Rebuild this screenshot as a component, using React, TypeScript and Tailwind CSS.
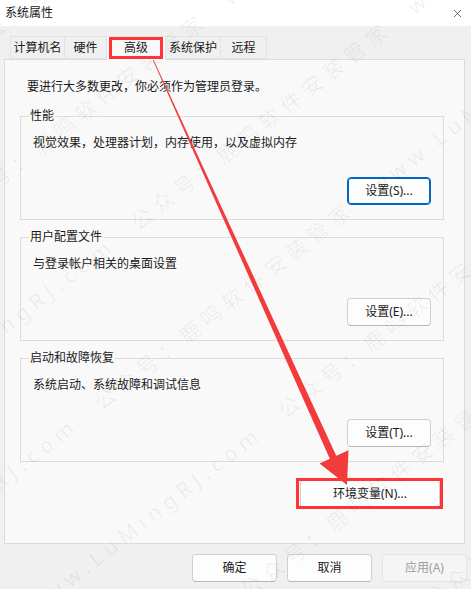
import { X } from "lucide-react";

const font = "font-['Noto_Sans','Noto_Sans_CJK_SC',sans-serif]";

type BtnProps = {
  label: string;
  primary?: boolean;
  disabled?: boolean;
  className?: string;
};

function WinButton({ label, primary, disabled, className = "" }: BtnProps) {
  const tone = disabled
    ? "border-[#e3e3e3] bg-[#f5f5f5] text-[#9d9d9d]"
    : primary
      ? "border-[#0067c0] bg-[#fdfdfd] text-[#1a1a1a] shadow-[inset_0_0_0_1px_#0067c0]"
      : "border-[#d0d0d0] border-b-[#b8b8b8] bg-[#fdfdfd] text-[#1a1a1a]";
  return (
    <button
      className={`flex h-[28px] items-center justify-center rounded-[4px] border text-[12px] leading-none ${tone} ${className}`}
    >
      {label}
    </button>
  );
}

type GroupProps = {
  title: string;
  text: string;
  button: string;
  primary?: boolean;
  className?: string;
};

function Group({ title, text, button, primary, className = "" }: GroupProps) {
  return (
    <div
      className={`relative flex h-[104px] w-[424px] flex-col border border-[#dcdcdc] ${className}`}
    >
      <span className="absolute -top-[9px] left-[8px] bg-[#f9f9f9] px-[1px] text-[12px] leading-[16px] text-[#1a1a1a]">
        {title}
      </span>
      <p className="ml-[12px] mt-[18px] text-[12px] leading-[16px] text-[#1a1a1a]">
        {text}
      </p>
      <div className="mr-[12px] mt-[26px] flex justify-end">
        <WinButton label={button} primary={primary} className="w-[84px]" />
      </div>
    </div>
  );
}

const tabs = [
  { name: "计算机名", w: "w-[55px]" },
  { name: "硬件", w: "w-[42px]" },
  { name: "高级", w: "w-[59px]", active: true },
  { name: "系统保护", w: "w-[55px]" },
  { name: "远程", w: "w-[46px]" },
];

function Watermark() {
  const row = "www.LuMingRJ.com\u2003公众号：鹿鸣软件安装管家\u2003";
  return (
    <div
      aria-hidden
      className="pointer-events-none absolute inset-0 overflow-hidden select-none"
    >
      <div className="absolute left-[-260px] top-[-200px] flex w-[1000px] -rotate-[38deg] flex-col gap-[88px] text-[21px] tracking-[6px] whitespace-nowrap text-black/[0.06]">
        {Array.from({ length: 9 }).map((_, i) => (
          <div key={i} className={i % 2 ? "pl-[140px]" : ""}>
            {row}
            {row}
          </div>
        ))}
      </div>
    </div>
  );
}

function Arrow() {
  // tapered red arrow from the tab down to the env button
  return (
    <svg
      className="pointer-events-none absolute inset-0"
      width="471"
      height="589"
      viewBox="0 0 471 589"
    >
      <polygon
        points="147.6,48.2 148.4,48.6 336.6,456.4 330.0,459.3"
        fill="#f23b3b"
      />
      <polygon points="319.5,463.5 348.5,450.3 347,485" fill="#f23b3b" />
    </svg>
  );
}

export default function App() {
  return (
    <div
      className={`relative h-[589px] w-[471px] overflow-hidden bg-[#f0f0f0] ${font}`}
    >
      <div className="flex h-[26px] items-center justify-between bg-white pl-[5px] pr-[7px]">
        <span className="text-[12px] leading-none text-[#1a1a1a]">系统属性</span>
        <X size={13} strokeWidth={1.2} className="text-[#222]" />
      </div>

      <div className="ml-[10px] mt-[10px] flex h-[23px]">
        {tabs.map((t) => (
          <div
            key={t.name}
            className={`relative flex items-center justify-center border border-l-0 first:border-l text-[12px] leading-none text-[#1a1a1a] ${t.w} ${
              t.active
                ? "z-10 -mb-px border-[#e5e5e5] border-b-transparent bg-[#f9f9f9]"
                : "border-[#e3e3e3] bg-[#f0f0f0]"
            }`}
          >
            {t.name}
            {t.active ? (
              <span className="absolute left-[2px] top-0 h-[22px] w-[54px] border-[3px] border-[#ff3434]" />
            ) : null}
          </div>
        ))}
      </div>

      <div className="ml-[4px] flex h-[485px] w-[461px] flex-col border border-[#dcdcdc] bg-[#f9f9f9] pl-[15px]">
        <p className="ml-[7px] mt-[19px] text-[12px] leading-[16px] text-[#1a1a1a]">
          要进行大多数更改，你必须作为管理员登录。
        </p>
        <Group
          className="mt-[21px]"
          title="性能"
          text="视觉效果，处理器计划，内存使用，以及虚拟内存"
          button="设置(S)..."
          primary
        />
        <Group
          className="mt-[17px]"
          title="用户配置文件"
          text="与登录帐户相关的桌面设置"
          button="设置(E)..."
        />
        <Group
          className="mt-[17px]"
          title="启动和故障恢复"
          text="系统启动、系统故障和调试信息"
          button="设置(T)..."
        />
        <div className="mt-[18px] flex w-[424px] justify-end pr-[4px]">
          <div className="relative">
            <WinButton label="环境变量(N)..." className="w-[140px]" />
            <span className="pointer-events-none absolute -left-[4px] -top-[2px] h-[31px] w-[147px] border-[3px] border-[#ff3434]" />
          </div>
        </div>
      </div>

      <div className="mr-[4px] mt-[10px] flex justify-end gap-[10px]">
        <WinButton label="确定" className="w-[85px]" />
        <WinButton label="取消" className="w-[85px]" />
        <WinButton label="应用(A)" disabled className="w-[85px]" />
      </div>

      <Watermark />
      <Arrow />
    </div>
  );
}
